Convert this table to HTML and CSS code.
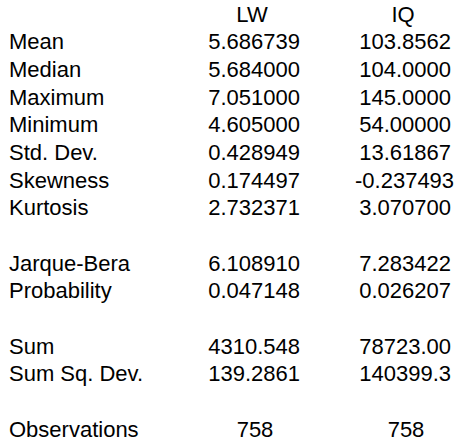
FILE: index.html
```html
<!DOCTYPE html>
<html>
<head>
<meta charset="utf-8">
<link rel="stylesheet" href="styles.css">
</head>
<body>
<div class="stats">
  <div class="row head"><span class="label"></span><span class="val c">LW</span><span class="val c">IQ</span></div>
  <div class="row"><span class="label">Mean</span><span class="val">5.686739</span><span class="val">103.8562</span></div>
  <div class="row"><span class="label">Median</span><span class="val">5.684000</span><span class="val">104.0000</span></div>
  <div class="row"><span class="label">Maximum</span><span class="val">7.051000</span><span class="val">145.0000</span></div>
  <div class="row"><span class="label">Minimum</span><span class="val">4.605000</span><span class="val">54.00000</span></div>
  <div class="row"><span class="label">Std. Dev.</span><span class="val">0.428949</span><span class="val">13.61867</span></div>
  <div class="row"><span class="label">Skewness</span><span class="val">0.174497</span><span class="val">-0.237493</span></div>
  <div class="row"><span class="label">Kurtosis</span><span class="val">2.732371</span><span class="val">3.070700</span></div>
  <div class="row blank"></div>
  <div class="row"><span class="label">Jarque-Bera</span><span class="val">6.108910</span><span class="val">7.283422</span></div>
  <div class="row"><span class="label">Probability</span><span class="val">0.047148</span><span class="val">0.026207</span></div>
  <div class="row blank"></div>
  <div class="row"><span class="label">Sum</span><span class="val">4310.548</span><span class="val">78723.00</span></div>
  <div class="row"><span class="label">Sum Sq. Dev.</span><span class="val">139.2861</span><span class="val">140399.3</span></div>
  <div class="row blank"></div>
  <div class="row"><span class="label">Observations</span><span class="val c obs">758</span><span class="val c obs">758</span></div>
</div>
</body>
</html>
```
FILE: styles.css
```css
html, body {
  margin: 0;
  padding: 0;
  background: #ffffff;
}
body {
  font-family: "Liberation Sans", Arial, sans-serif;
  font-size: 22px;
  color: #000000;
}
.stats {
  padding-left: 9px;
  padding-top: 0.5px;
  display: flex;
  flex-direction: column;
}
.row {
  display: grid;
  grid-template-columns: 140px 96px 96px;
  column-gap: 55px;
  height: 27.7px;
  line-height: 27.7px;
  white-space: nowrap;
}
.val {
  text-align: right;
}
.val.c {
  text-align: center;
}
.val.obs {
  padding-left: 6px;
}
```
